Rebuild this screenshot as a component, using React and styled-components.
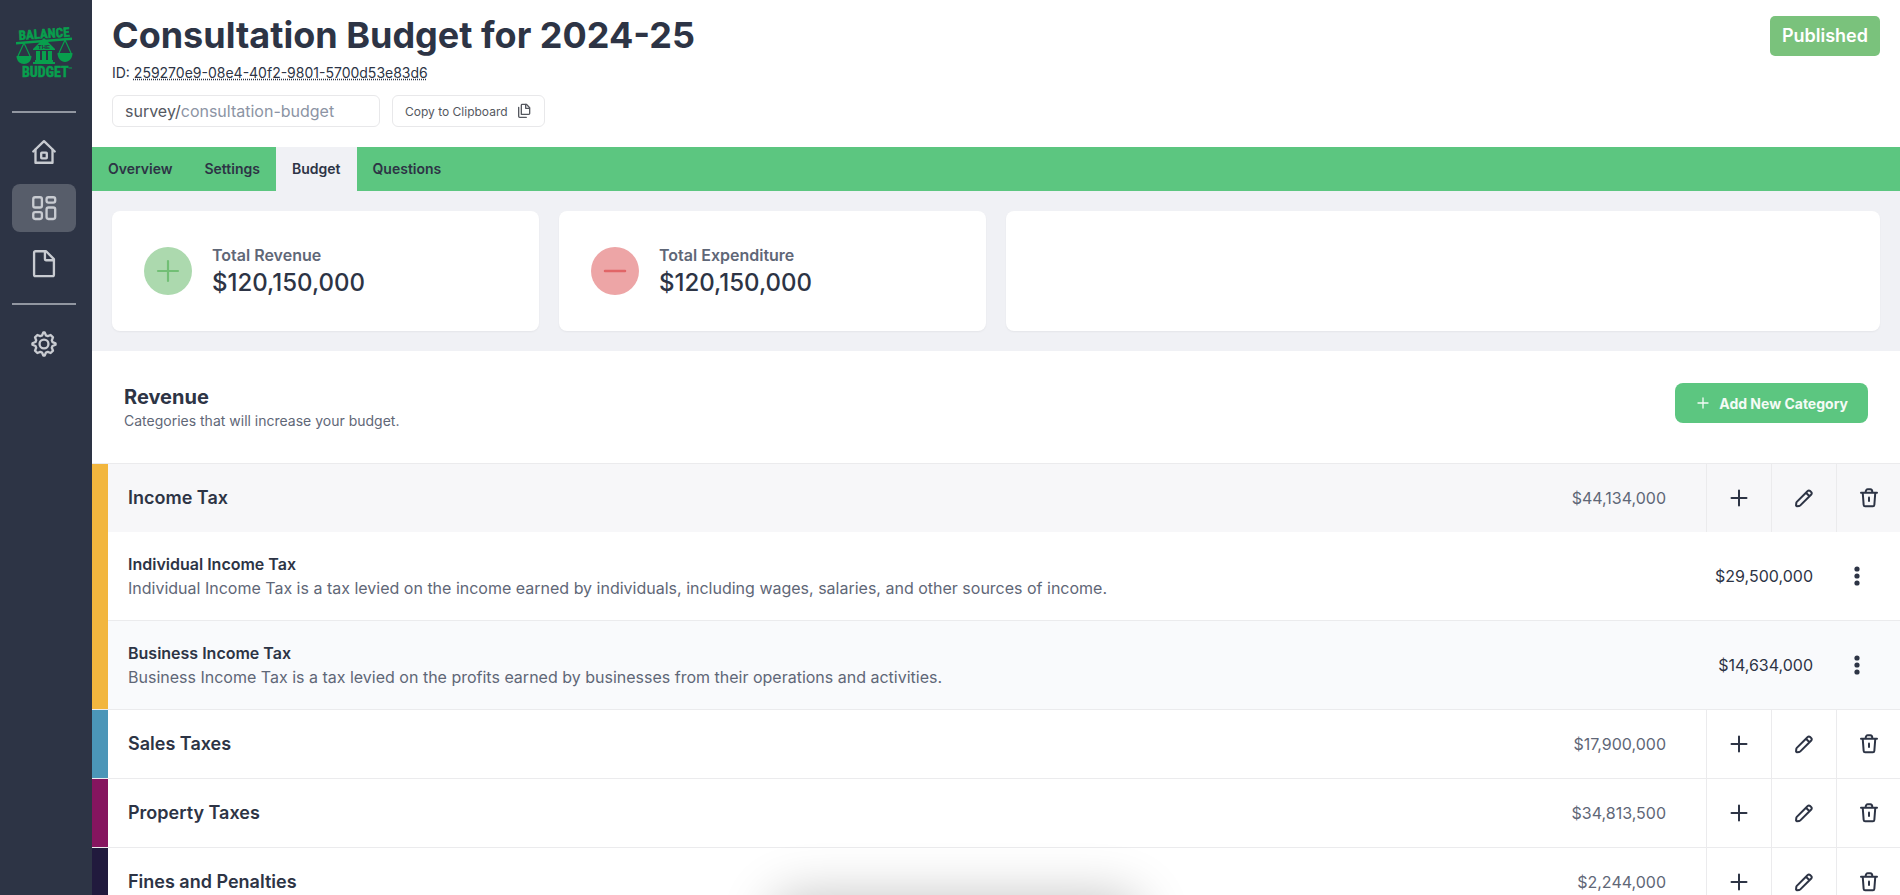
import React from "react";
import styled, { createGlobalStyle, css } from "styled-components";

const theme = {
  dark: "#2d3445",
  text: "#2d3445",
  muted: "#5f6777",
  green: "#5cc680",
  surface: "#f0f1f5",
  border: "#ebebed",
};

const GlobalStyle = createGlobalStyle`
  * {
    box-sizing: border-box;
  }
  body {
    margin: 0;
    background: #fff;
    color: ${theme.text};
    font-family: Inter, "Liberation Sans", sans-serif;
    font-size: 16px;
    line-height: 24px;
    overflow: hidden;
  }
  h1, h2, h3, h4, p {
    margin: 0;
  }
  button, input {
    font-family: inherit;
  }
`

const Layout = styled.div`
  display: flex;
  height: 100vh;
  overflow: hidden;
`

const Sidebar = styled.nav`
  background: ${theme.dark};
  display: flex;
  flex-direction: column;
  flex: 0 0 92px;
  padding: 20px 16px 20px 12px;
`

const LogoLink = styled.a`
  display: block;
  height: 64px;
  margin-bottom: 27px;
`

const Divider = styled.hr`
  background: #9297a1;
  border: 0;
  height: 2px;
  margin: 0;
  width: 100%;
`

const NavGroup = styled.div`
  display: flex;
  flex-direction: column;
  gap: 8px;
  padding: 15px 0;
`

const NavLink = styled.a`
  align-items: center;
  background: ${({ $active }) => ($active ? "#575d6a" : "transparent")};
  border-radius: 8px;
  color: #c8cbd1;
  display: flex;
  height: 48px;
  justify-content: center;
`

const Main = styled.main`
  flex: 1;
  min-width: 0;
`

const Header = styled.header`
  align-items: flex-start;
  display: flex;
  justify-content: space-between;
  padding: 16px 20px 20px;
`

const HeaderText = styled.div`
  display: flex;
  flex-direction: column;
  gap: 8px;
`

const Title = styled.h1`
  font-size: 36px;
  font-weight: 700;
  line-height: 39px;
`

const SurveyId = styled.p`
  font-size: 14px;
  line-height: 20px;

  abbr {
    text-decoration: underline dotted;
  }
`

const ShareRow = styled.div`
  display: flex;
  gap: 12px;
  padding-top: 4px;
`

const outlined = css`
  align-items: center;
  background: #fff;
  border: 1px solid #e8e8ea;
  border-radius: 6px;
  color: #55585f;
  display: flex;
  height: 32px;
  padding: 0 12px;
`

const SlugField = styled.label`
  ${outlined}
  width: 268px;
`

const SlugInput = styled.input`
  border: 0;
  color: #8c94a4;
  flex: 1;
  font-size: 16px;
  min-width: 0;
  outline: 0;
  padding: 0;
`

const CopyButton = styled.button`
  ${outlined}
  font-size: 12px;
  gap: 8px;
`

const Status = styled.span`
  background: #7ac27c;
  border-radius: 5px;
  color: #fff;
  font-size: 18px;
  font-weight: 600;
  line-height: 40px;
  padding: 0 12px;
`

const Tabs = styled.nav`
  background: ${theme.green};
  display: flex;
`

const Tab = styled.a`
  background: ${({ $active }) => ($active ? theme.surface : "transparent")};
  color: ${theme.text};
  font-size: 14px;
  font-weight: 600;
  line-height: 44px;
  padding: 0 16px;
  text-decoration: none;
`

const Summary = styled.section`
  background: ${theme.surface};
  display: grid;
  gap: 20px;
  grid-template-columns: repeat(4, 1fr);
  padding: 20px;
`

const Card = styled.div`
  align-items: center;
  background: #fff;
  border-radius: 8px;
  box-shadow: 0 1px 2px rgba(0, 0, 0, 0.05);
  display: flex;
  gap: 20px;
  grid-column: span ${({ $span }) => $span || 1};
  min-height: 120px;
  padding: 0 32px;
`

const Round = styled.div`
  align-items: center;
  background: ${({ $bg }) => $bg};
  border-radius: 50%;
  color: ${({ $color }) => $color};
  display: flex;
  height: 48px;
  justify-content: center;
  width: 48px;
`

const CardLabel = styled.p`
  color: ${theme.muted};
  font-weight: 600;
`

const CardValue = styled.p`
  font-size: 24px;
  font-weight: 500;
  line-height: 32px;
`

const SectionHeader = styled.div`
  align-items: flex-start;
  display: flex;
  justify-content: space-between;
  padding: 32px;
`

const SectionTitle = styled.h2`
  font-size: 20px;
  font-weight: 700;
  line-height: 28px;
`

const SectionText = styled.p`
  color: ${theme.muted};
  font-size: 14px;
  line-height: 20px;
`

const AddButton = styled.button`
  align-items: center;
  background: ${theme.green};
  border: 0;
  border-radius: 8px;
  color: #f4fbf6;
  display: flex;
  font-size: 14px;
  font-weight: 700;
  gap: 6px;
  height: 40px;
  padding: 0 20px 0 18px;
`

const Category = styled.section`
  border-top: 1px solid ${theme.border};
  display: grid;
  grid-template-columns: 16px minmax(0, 1fr);
`

const Stripe = styled.div`
  background: ${({ $color }) => $color};
`

const CategoryRow = styled.div`
  align-items: center;
  background: ${({ $open }) => ($open ? "#f7f7f9" : "#fff")};
  display: flex;
  height: 68px;
  padding-left: 20px;
`

const CategoryName = styled.h3`
  flex: 1;
  font-size: 18px;
  font-weight: 600;
`

const Amount = styled.span`
  color: ${({ $muted }) => ($muted ? theme.muted : theme.text)};
  margin-right: ${({ $muted }) => ($muted ? "40px" : "32px")};
`

const IconButton = styled.button`
  align-items: center;
  background: transparent;
  border: 0;
  border-left: 1px solid ${theme.border};
  color: ${theme.text};
  display: flex;
  height: 100%;
  justify-content: center;
  padding: 0;
  width: 65px;

  &:last-child {
    width: 64px;
  }
`

const Item = styled.div`
  align-items: center;
  background: #fff;
  display: flex;
  padding: 20px 31px 20px 20px;

  & + & {
    background: #f9fafc;
    border-top: 1px solid ${theme.border};
  }
`

const ItemText = styled.div`
  flex: 1;
`

const ItemName = styled.h4`
  font-size: 16px;
  font-weight: 600;
`

const ItemDescription = styled.p`
  color: ${theme.muted};
`

const MenuButton = styled.button`
  background: transparent;
  border: 0;
  color: ${theme.text};
  height: 24px;
  padding: 0;
  width: 24px;
`

// sits just under the fold, only its shadow shows
const Dock = styled.div`
  border-radius: 24px;
  bottom: -100px;
  box-shadow: 0 0 52px rgba(0, 0, 0, 0.23);
  height: 100px;
  left: 50%;
  margin-left: -178px;
  position: fixed;
  width: 368px;
`

const Svg = ({ size = 24, weight = 1.5, children }) => (
  <svg
    width={size}
    height={size}
    viewBox="0 0 24 24"
    fill="none"
    stroke="currentColor"
    strokeWidth={weight}
    strokeLinecap="round"
    strokeLinejoin="round"
    aria-hidden="true"
  >
    {children}
  </svg>
)

const HomeIcon = () => (
  <Svg size={28} weight={2}>
    <path d="M2.8 11.6L12 2.7L21.2 11.6" />
    <path d="M4.7 10V21.2H19.3V10" />
    <rect x="9.6" y="12.6" width="4.8" height="4.8" rx="0.5" />
  </Svg>
)

const DashboardIcon = () => (
  <Svg size={28} weight={2}>
    <rect x="2.8" y="2.8" width="7.4" height="8.8" rx="1.6" />
    <rect x="14.2" y="2.8" width="7.4" height="4.6" rx="1.6" />
    <rect x="2.8" y="15.6" width="7.4" height="5.8" rx="1.6" />
    <rect x="14.2" y="11.6" width="7.4" height="9.8" rx="1.6" />
  </Svg>
)

const PageIcon = () => (
  <Svg size={28} weight={2}>
    <path d="M3.5 21.2V2.3C3.5 1.6 4 1.1 4.7 1.1H13.8L20.5 7.8V21.2C20.5 21.9 20 22.4 19.3 22.4H4.7C4 22.4 3.5 21.9 3.5 21.2Z" />
    <path d="M12.8 1.4V8C12.8 8.5 13.1 8.800 13.6 8.800H20.2" />
  </Svg>
)

const SettingsIcon = () => (
  <Svg size={28} weight={2}>
    <circle cx="12" cy="12" r="3.8" />
    <path d="M19.3 10.4L18.7 8.9L19.7 6.3L17.7 4.300L15.200 5.300L13.700 4.700L12.600 2.100H11.400L10.300 4.700L8.800 5.300L6.300 4.300L4.300 6.300L5.300 8.800L4.700 10.300L2.100 11.400V12.600L4.700 13.700L5.300 15.200L4.300 17.700L6.300 19.700L8.800 18.700L10.300 19.300L11.400 21.900H12.600L13.700 19.300L15.200 18.700L17.700 19.700L19.700 17.700L18.700 15.200L19.300 13.700L21.900 12.600V11.400Z" />
  </Svg>
)

const PlusIcon = ({ size, weight }) => (
  <Svg size={size} weight={weight}>
    <path d="M6 12H12M18 12H12M12 12V6M12 12V18" />
  </Svg>
)

const MinusIcon = ({ size, weight }) => (
  <Svg size={size} weight={weight}>
    <path d="M6 12H18" />
  </Svg>
)

const PencilIcon = () => (
  <Svg size={20} weight={2.4}>
    <path d="M14.36 5.65L16.48 3.53C17.26 2.75 18.53 2.75 19.31 3.53L20.72 4.94C21.5 5.72 21.5 6.99 20.72 7.77L18.6 9.9M14.36 5.65L3.35 16.66C3.02 16.99 2.82 17.42 2.77 17.89L2.47 20.74C2.41 21.33 2.91 21.84 3.51 21.78L6.36 21.48C6.83 21.43 7.26 21.23 7.59 20.9L18.6 9.9M14.36 5.65L18.6 9.9" />
  </Svg>
)

const TrashIcon = () => (
  <Svg size={20} weight={2.4}>
    <path d="M19.5 6L18.4 20.4C18.3 21.4 17.7 22 16.7 22H7.3C6.3 22 5.7 21.4 5.6 20.4L4.5 6" />
    <path d="M2.4 5.6H21.6M8 5.2C8 2.8 9.2 1.4 10.5 1.400H13.5C14.8 1.4 16 2.8 16 5.200" />
    <path d="M12 11.500V15.500" />
  </Svg>
)

const CopyIcon = () => (
  <Svg size={16} weight={2}>
    <path d="M8 17V3.2C8 2.500 8.500 2 9.200 2H15.500L20.500 7V15.800C20.500 16.500 20 17 19.300 17H8Z" />
    <path d="M14.500 2.300V8H20.200" />
    <path d="M4 6.500V20C4 20.900 4.600 21.500 5.500 21.500H15.500" />
  </Svg>
)

const DotsIcon = () => (
  <svg width="24" height="24" viewBox="0 0 24 24" fill="currentColor" aria-hidden="true">
    <circle cx="12" cy="5" r="2.6" />
    <circle cx="12" cy="12" r="2.6" />
    <circle cx="12" cy="19" r="2.6" />
  </svg>
)

const Logo = () => (
  <svg width="64" height="64" viewBox="0 0 64 64" fill="#089f4d" role="img" aria-label="Balance the Budget">
    <g
      fontFamily="'Roboto Condensed', 'Liberation Sans Narrow', 'Liberation Sans', sans-serif"
      fontWeight="700"
      stroke="#089f4d"
      strokeWidth="0.5"
    >
      <text x="7" y="20" fontSize="13" transform="rotate(-4 7 20)">BALANCE</text>
      <text x="10" y="57" fontSize="14">BUDGET</text>
    </g>
    <path d="M4 22L60 17.5V20L4 24.5Z" />
    <g fill="none" stroke="#089f4d" strokeWidth="1.2">
      <path d="M12 23L6 36M12 23L18 36M53 20L47 33M53 20L59 33" />
    </g>
    <path d="M4.5 36H19.5C19.5 41 16 44 12 44S4.5 41 4.5 36Z" />
    <path d="M45.5 33H60.5C60.5 38.5 57 42 53 42S45.5 38.5 45.5 33Z" />
    <path d="M32 18L43 29V30H21V29Z" />
    <path d="M24 31H28V40H24ZM30 31H34V40H30ZM36 31H40V40H36Z" />
    <path d="M23 40H41V42H43V44H21V42H23Z" />
    <text x="32" y="29" fontSize="6" fontWeight="700" textAnchor="middle" fill={theme.dark} fontFamily="'Liberation Sans', sans-serif">THE</text>
    <path d="M56.5 47.5H60V48.5H56.5Z" />
  </svg>
)

const tabs = ["Overview", "Settings", "Budget", "Questions"];

const categories = [
  {
    name: "Income Tax",
    amount: "$44,134,000",
    color: "#f2b63e",
    items: [
      {
        name: "Individual Income Tax",
        description:
          "Individual Income Tax is a tax levied on the income earned by individuals, including wages, salaries, and other sources of income.",
        amount: "$29,500,000",
      },
      {
        name: "Business Income Tax",
        description:
          "Business Income Tax is a tax levied on the profits earned by businesses from their operations and activities.",
        amount: "$14,634,000",
      },
    ],
  },
  { name: "Sales Taxes", amount: "$17,900,000", color: "#4b96b8", items: [] },
  { name: "Property Taxes", amount: "$34,813,500", color: "#86155f", items: [] },
  { name: "Fines and Penalties", amount: "$2,244,000", color: "#211a3d", items: [] },
];

function BudgetCategory ({ name, amount, color, items }) {
  return (
    <Category>
      <Stripe $color={color} />
      <div>
        <CategoryRow $open={items.length > 0}>
          <CategoryName>{name}</CategoryName>
          <Amount $muted>{amount}</Amount>
          <IconButton aria-label={`Add to ${name}`}><PlusIcon size={30} weight={1.6} /></IconButton>
          <IconButton aria-label={`Edit ${name}`}><PencilIcon /></IconButton>
          <IconButton aria-label={`Delete ${name}`}><TrashIcon /></IconButton>
        </CategoryRow>
        {items.map(item => (
          <Item key={item.name}>
            <ItemText>
              <ItemName>{item.name}</ItemName>
              <ItemDescription>{item.description}</ItemDescription>
            </ItemText>
            <Amount>{item.amount}</Amount>
            <MenuButton aria-label={`${item.name} options`}><DotsIcon /></MenuButton>
          </Item>
        ))}
      </div>
    </Category>
  );
}

function App () {
  return (
    <Layout>
      <GlobalStyle />
      <Sidebar>
        <LogoLink href="#"><Logo /></LogoLink>
        <Divider />
        <NavGroup>
          <NavLink href="#" aria-label="Home"><HomeIcon /></NavLink>
          <NavLink href="#" aria-label="Surveys" $active><DashboardIcon /></NavLink>
          <NavLink href="#" aria-label="Pages"><PageIcon /></NavLink>
        </NavGroup>
        <Divider />
        <NavGroup>
          <NavLink href="#" aria-label="Settings"><SettingsIcon /></NavLink>
        </NavGroup>
      </Sidebar>
      <Main>
        <Header>
          <HeaderText>
            <Title>Consultation Budget for 2024-25</Title>
            <SurveyId>
              ID: <abbr>259270e9-08e4-40f2-9801-5700d53e83d6</abbr>
            </SurveyId>
            <ShareRow>
              <SlugField>
                survey/
                <SlugInput name="slug" defaultValue="consultation-budget" />
              </SlugField>
              <CopyButton>
                Copy to Clipboard
                <CopyIcon />
              </CopyButton>
            </ShareRow>
          </HeaderText>
          <Status>Published</Status>
        </Header>
        <Tabs>
          {tabs.map(tab => (
            <Tab key={tab} href="#" $active={tab === "Budget"}>{tab}</Tab>
          ))}
        </Tabs>
        <Summary>
          <Card>
            <Round $bg="#acd9ae" $color="#72bf75"><PlusIcon size={40} weight={1.3} /></Round>
            <div>
              <CardLabel>Total Revenue</CardLabel>
              <CardValue>$120,150,000</CardValue>
            </div>
          </Card>
          <Card>
            <Round $bg="#eda5a6" $color="#e16567"><MinusIcon size={40} weight={1.5} /></Round>
            <div>
              <CardLabel>Total Expenditure</CardLabel>
              <CardValue>$120,150,000</CardValue>
            </div>
          </Card>
          <Card $span={2} />
        </Summary>
        <SectionHeader>
          <div>
            <SectionTitle>Revenue</SectionTitle>
            <SectionText>Categories that will increase your budget.</SectionText>
          </div>
          <AddButton>
            <PlusIcon size={20} weight={1.6} />
            Add New Category
          </AddButton>
        </SectionHeader>
        {categories.map(category => (
          <BudgetCategory key={category.name} {...category} />
        ))}
      </Main>
      <Dock />
    </Layout>
  );
}

export default App;
